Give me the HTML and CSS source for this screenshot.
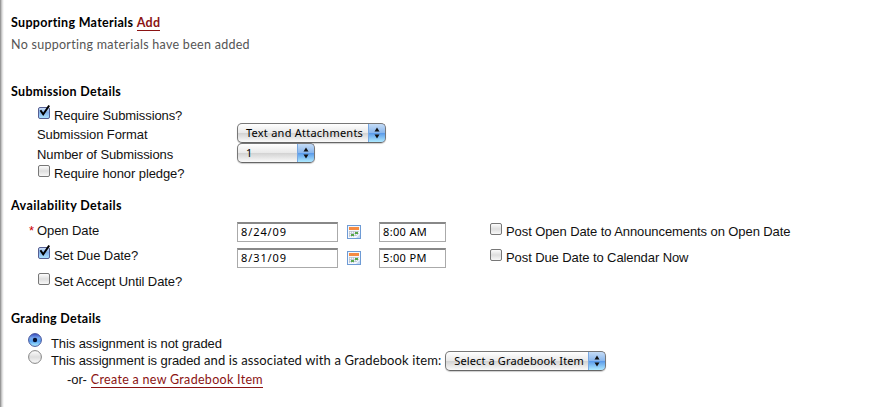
FILE: index.html
```
<!DOCTYPE html>
<html lang="en">
<head>
<meta charset="utf-8">
<title>Assignment</title>
<link rel="stylesheet" href="styles.css">
</head>
<body>
<svg width="0" height="0" class="defs" aria-hidden="true">
<defs>
<linearGradient id="blue" x2="0" y2="1"><stop offset="0" stop-color="#d2e3f8"/><stop offset=".45" stop-color="#84b2ec"/><stop offset="1" stop-color="#aee4ff"/></linearGradient>
<linearGradient id="grey" x2="0" y2="1"><stop offset="0" stop-color="#fff"/><stop offset=".5" stop-color="#dedede"/><stop offset="1" stop-color="#fafafa"/></linearGradient>
<linearGradient id="ball" x2="0" y2="1"><stop offset="0" stop-color="#3145c0"/><stop offset=".35" stop-color="#79a9ee"/><stop offset=".6" stop-color="#58a4f4"/><stop offset="1" stop-color="#b5f4ff"/></linearGradient>
<symbol id="off" viewBox="0 0 15 16"><rect x="1.5" y="3.5" width="11" height="11" rx="1.5" fill="url(#grey)" stroke="#777"/></symbol>
<symbol id="on" viewBox="0 0 15 16"><rect x="1.5" y="3.5" width="11" height="11" rx="1.5" fill="url(#blue)" stroke="#565e92"/><path d="M3.4 6.3 6.2 10.3 12.2 1.5" fill="none" stroke="#000" stroke-width="2"/></symbol>
<symbol id="cal" viewBox="0 0 14 14"><rect x=".5" y=".5" width="13" height="13" fill="#f4f8fd" stroke="#6e9bd5"/><path d="M2 2h10v3H2z" fill="#f58a42"/><path d="M2.5 6v6M4.5 6v6M6.5 6v6M8.5 6v5M10.5 6v4M2 6.5h10M2 8.5h10M2 10.5h8" stroke="#b5bdca" stroke-width=".7"/><path d="M8 7h3v2H8zM4 9h3v2H4z" fill="#55a648"/><path d="m9 13 4-4v4z" fill="#c6d9f4"/></symbol>
<symbol id="arrows" viewBox="0 0 6 12"><path d="M.5 4.5h5L3 .5zM.5 7.5h5L3 11.5z" fill="#111"/></symbol>
</defs>
</svg>
<main class="page">
<h2 class="heading first"><span class="h-support">Supporting Materials</span> <a class="link add">Add</a></h2>
<p class="empty">No supporting materials have been added</p>

<h2 class="heading submission">Submission Details</h2>
<div class="row check"><svg class="box"><use href="#on"/></svg><span>Require Submissions?</span></div>
<div class="row"><span class="label">Submission Format</span><div class="select format"><span>Text and Attachments</span><i><svg><use href="#arrows"/></svg></i></div></div>
<div class="row number"><span class="label">Number of Submissions</span><div class="select count"><span>1</span><i><svg><use href="#arrows"/></svg></i></div></div>
<div class="row check"><svg class="box"><use href="#off"/></svg><span>Require honor pledge?</span></div>

<h2 class="heading availability">Availability Details</h2>
<div class="row date"><span class="label"><b class="star">*</b>Open Date</span><div class="field day">8/24/09</div><svg class="cal"><use href="#cal"/></svg><div class="field time">8:00 AM</div><div class="post"><svg class="box"><use href="#off"/></svg><span>Post Open Date to Announcements on Open Date</span></div></div>
<div class="row date due"><span class="label set"><svg class="box"><use href="#on"/></svg><span>Set Due Date?</span></span><div class="field day">8/31/09</div><svg class="cal"><use href="#cal"/></svg><div class="field time">5:00 PM</div><div class="post"><svg class="box"><use href="#off"/></svg><span>Post Due Date to Calendar Now</span></div></div>
<div class="row check accept"><svg class="box"><use href="#off"/></svg><span>Set Accept Until Date?</span></div>

<h2 class="heading grading">Grading Details</h2>
<div class="row option"><svg class="radio" viewBox="0 0 14 14"><circle cx="7" cy="7" r="6.4" fill="url(#ball)" stroke="#48549a"/><circle cx="7" cy="7" r="2.2" fill="#061030"/></svg><span>This assignment is not graded</span></div>
<div class="row option second"><svg class="radio" viewBox="0 0 14 14"><circle cx="7" cy="7" r="6.4" fill="url(#grey)" stroke="#858585"/></svg><span>This assignment is graded <span class="assoc">and is associated with a Gradebook item:</span></span><div class="select item"><span>Select a Gradebook Item</span><i><svg><use href="#arrows"/></svg></i></div></div>
<div class="row or"><span>-or-</span><a class="link create">Create a new Gradebook Item</a></div>
</main>
</body>
</html>
```
FILE: styles.css
```
* { box-sizing: border-box; }
body { margin: 0; background: #fff; overflow: hidden; font: 13px/19px "Liberation Sans", sans-serif; letter-spacing: -.09px; color: #111; }
.defs { position: absolute; }
.page { height: 407px; padding: 13px 0 0 11px; background: linear-gradient(90deg, #999 1px, #c4c4c4 1px 2px, #e2e2e2 2px 3px, #f6f6f6 3px 4px, #fff 4px); }
.heading { margin: 0; height: 19px; font: bold 12.5px/19px Lato, sans-serif; letter-spacing: .3px; color: #000; white-space: nowrap; }
.first { height: 20px; }
.link { color: #8b1313; text-decoration: none; border-bottom: 1px solid #8b1313; }
.add { display: inline-block; line-height: 14px; }
.empty { margin: 0; height: 49px; font: 12.5px/23px Lato, sans-serif; color: #555; letter-spacing: .28px; }
.submission { height: 24px; }
.row { display: flex; height: 19px; padding-left: 26px; white-space: nowrap; }
.row.number { height: 20px; line-height: 21px; }
.number .select { margin-top: -1px; }
.box { width: 15px; height: 16px; flex: none; margin: -2px 2px 0 0; }
.label { width: 200px; flex: none; }
.select { display: flex; justify-content: space-between; height: 20px; margin-top: -2px; border: 1px solid #777; border-bottom-color: #666; border-radius: 5px; background: linear-gradient(#fff, #e9e9e9 48%, #d3d3d3 52%, #fafafa); font: 11px/18px "Noto Sans", sans-serif; letter-spacing: .24px; padding-left: 8px; overflow: hidden; color: #000; box-shadow: 0 1px 1px #ccc; }
.select i { width: 18px; margin: -1px -1px -1px 0; border: 1px solid #4469b4; border-left-color: #78a8e2; border-radius: 0 5px 5px 0; background: linear-gradient(#c5dcf6, #8ab7ed 48%, #5b9bea 52%, #aeeaff); display: flex; align-items: center; justify-content: center; }
.select svg { width: 6px; height: 12px; }
.format { width: 149px; }
.count { width: 78px; }
.availability { margin-top: 13px; height: 22px; letter-spacing: .4px; }
.row.date { height: 26px; line-height: 25px; }
.star { display: inline-block; width: 8px; margin-left: -8px; font-weight: normal; color: #c00; }
.field { height: 20px; margin-top: 4px; padding-left: 3px; border: 1px solid #aaa; border-top: 2px solid #888; font: 11px/16px "Noto Sans", sans-serif; color: #000; }
.day { width: 101px; letter-spacing: .9px; }
.cal { width: 14px; height: 14px; margin: 7px 18px 0 9px; }
.time { width: 67px; letter-spacing: .35px; }
.post { display: flex; margin-left: 43px; line-height: 27px; }
.date .box { margin-top: 2px; }
.date .set .box { margin-top: 0; }
.set { display: flex; line-height: 24px; }
.row.accept { height: 39px; line-height: 23px; }
.accept .box { margin-top: 0; }
.heading.grading { height: 26px; }
.row.option { height: 17px; line-height: 17px; padding-left: 17px; }
.radio { width: 14px; height: 14px; margin: -2px 9px 0 0; flex: none; }
.row.second { height: 18px; line-height: 17px; }
.assoc { font-family: Lato, sans-serif; letter-spacing: .12px; }
.item { width: 161px; margin: -1px 0 0 4px; letter-spacing: .12px; }
.or { padding-left: 56px; }
.create { font: 12.5px/15px Lato, sans-serif; letter-spacing: .3px; height: 16px; margin: 2px 0 0 4px; }
```
